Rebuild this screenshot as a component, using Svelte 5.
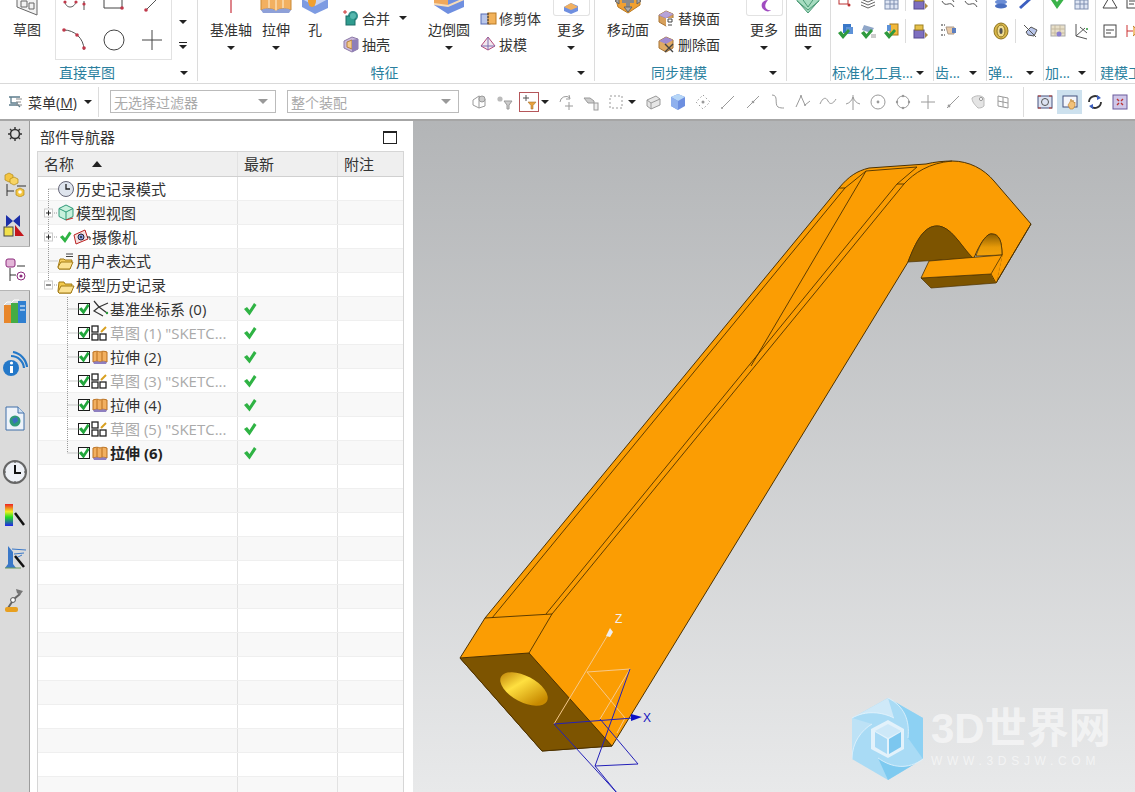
<script>
  const g = '#9a9a9a';
  const icons = {
    // ribbon, small
    unite: `<circle cx="11" cy="7" r="5" fill="#2f8f8a"/><rect x="4" y="7" width="9" height="9" fill="#2f9c8f" stroke="#1d6c66"/><path d="M1 3h4M3 1v4" stroke="#c33" /><circle cx="11" cy="7" r="3" fill="#55b7ae"/>`,
    shell: `<path d="M2 6l8-4 6 2v10l-6 3-8-4z" fill="#c9b8dc" stroke="#8d7aa6"/><path d="M5 7l5-2v9l-5-2z" fill="#f3c98a" stroke="#b58140"/><path d="M10 5l6-1v10l-6 3z" fill="#8f7fb8"/>`,
    trim: `<rect x="2" y="5" width="9" height="10" fill="#b9c6ea" stroke="#5a6fb5"/><rect x="9" y="4" width="8" height="11" fill="#f2b25a" stroke="#b97a25"/><path d="M9 4v11" stroke="#333" stroke-dasharray="2 1"/>`,
    draft: `<path d="M9 2L2 11l7 4 7-4z" fill="#f2e6ee" stroke="#b44a7a"/><path d="M9 2v13M2 11h14" stroke="#7d6fb0"/>`,
    replace: `<path d="M2 6l7-4 7 3v8l-7 4-7-4z" fill="#d7a05c" stroke="#a87435"/><path d="M2 6l7 3 7-4" fill="none" stroke="#8e7fc0"/><path d="M9 2l7 3-7 4-7-3z" fill="#b6a3d8"/><rect x="9" y="9" width="8" height="8" fill="#fff"/><path d="M11 10h4v3h-4zM11 16h4" stroke="#444" fill="none"/>`,
    del: `<path d="M2 6l7-4 7 3v8l-7 4-7-4z" fill="#e0aa64" stroke="#a87435"/><path d="M9 2l7 3-7 4-7-3z" fill="#a18bd0"/><path d="M8 9l8 8M16 9l-8 8" stroke="#444" stroke-width="1.4"/>`,
    // ribbon, right hand groups
    a1: `<rect x="7" y="2" width="8" height="9" fill="#3a78c8"/><rect x="10" y="5" width="7" height="7" fill="#5d92d8"/><path d="M2 11l3-2 2.500 3L12 7l2 2-7 8z" fill="#2f9a3e"/>`,
    a2: `<path d="M5 3l10 3-3 5-9-3z" fill="#8fa6c8"/><path d="M2 11l3-2 2.500 3L12 7l2 2-7 8z" fill="#2f9a3e"/><rect x="12" y="12" width="5" height="4" fill="#ccc"/>`,
    a3: `<rect x="8" y="2" width="8" height="11" fill="#f2b83a" stroke="#a87b1b"/><rect x="5" y="3" width="4" height="6" fill="#5d92d8"/><path d="M2 11l3-2 2.500 3L12 7l2 2-7 8z" fill="#2f9a3e"/>`,
    a4: `<rect x="3" y="8" width="10" height="8" fill="#7e6fc0" stroke="#55488f"/><rect x="4" y="3" width="8" height="5" fill="#e6c04a" stroke="#9e8222"/><path d="M14 10l3 3-3 3z" fill="#a84"/>`,
    gear: `<path d="M2 3h4M2 8h4M2 13h4" stroke="#333" stroke-dasharray="2 1"/><path d="M7 5h8v7H9z" fill="#e8c9a6" stroke="#a98"/><rect x="13" y="6" width="4" height="5" fill="#5d7fc0"/>`,
    spring: `<ellipse cx="9" cy="9" rx="7" ry="8" fill="#d8b64a" stroke="#8e7520"/><ellipse cx="9" cy="9" rx="4" ry="6" fill="#f0dc90" stroke="#8e7520"/><ellipse cx="9" cy="9" rx="1.6" ry="3" fill="#555"/>`,
    damper: `<path d="M3 3l12 12M5 10l5-5 6 3-3 6-6-1z" fill="#b9c6ea" stroke="#555"/>`,
    gridp: `<rect x="2" y="3" width="14" height="11" fill="#e8dfc8" stroke="#aaa"/><path d="M2 7h14M2 11h14M6 3v11M11 3v11" stroke="#c4b9a0"/><circle cx="10" cy="12" r="2.5" fill="#8a7fd0"/>`,
    axes: `<path d="M4 2v12l11 3M4 14l9-8M8 5l7 6" fill="none" stroke="#555"/><circle cx="15" cy="7" r="1" fill="#2a9a3a"/>`,
    doc: `<rect x="3" y="3" width="12" height="12" fill="#fff" stroke="#444"/><path d="M5 8h8M5 11h5" stroke="#444"/>`,
    arrow: `<path d="M3 3v12M3 9h12" stroke="#c33"/><path d="M9 4l6 5-6 5" fill="#f2c27a" stroke="#b97a25"/>`,
    tri: `<path d="M9 3l7 12H2z" fill="#fff" stroke="#444"/>`,
    stack: `<ellipse cx="9" cy="5" rx="6" ry="2.6" fill="#4a6fc0"/><ellipse cx="9" cy="9" rx="6" ry="2.6" fill="#6c8ed6"/><ellipse cx="9" cy="13" rx="6" ry="2.6" fill="#4a6fc0"/>`,
    check: `<path d="M2 7l3-2 3 4 5-6 3 2-8 11z" fill="#3bb34a"/>`,
    pen: `<path d="M4 14l10-9 2 2-10 9z" fill="#3c5fc0"/>`,
    layers: `<path d="M9 3l7 3-7 3-7-3zM2 9l7 3 7-3M2 12l7 3 7-3" fill="none" stroke="#666"/>`,
    table: `<rect x="3" y="2" width="13" height="14" fill="#dfe6f4" stroke="#7f8fb0"/><path d="M3 7h13M3 11h13M8 2v14M12 2v14" stroke="#7f8fb0"/>`,
    rectdot: `<rect x="3" y="2" width="9" height="9" fill="#fff" stroke="#b33"/><rect x="13" y="3" width="4" height="4" fill="#e8a23c"/><circle cx="13" cy="12" r="1.5" fill="#b33"/>`,
    filter: `<path d="M3 5h6M6 2v6" stroke="#555"/><path d="M8 9h8l-3 3.500V16h-2v-3.500z" fill="#e8a23c" stroke="#a87435" stroke-width=".6"/>`,
    curves: `<path d="M3 3c4 8 8-2 12 6M3 8c4 8 8-2 12 6" fill="none" stroke="#555"/>`,
    // selection bar
    t1: `<path d="M3 7l6-4v12l-6-3zM9 3l6 3v7l-6 2" fill="none" stroke="${g}"/><circle cx="12" cy="6" r="3" fill="#ccc" stroke="${g}"/>`,
    t2: `<circle cx="5" cy="6" r="2.6" fill="#bbb"/><path d="M9 8h8l-3 4v4h-2v-4z" fill="#ccc" stroke="${g}"/>`,
    t4: `<path d="M3 9a6 6 0 0 1 10-4" fill="none" stroke="${g}"/><path d="M12 2l1 4-4 0" fill="none" stroke="${g}"/><path d="M12 9v8M8 13h8" stroke="${g}"/>`,
    t5: `<path d="M2 5h6l4 3v2H6z" fill="#ccc" stroke="${g}"/><rect x="12" y="10" width="4" height="7" fill="#eee" stroke="${g}"/>`,
    t6: `<rect x="3" y="3" width="12" height="12" fill="none" stroke="${g}" stroke-dasharray="2 2"/>`,
    t7: `<path d="M3 7l9-4 4 3v6l-9 4-4-3z" fill="#e6e6e6" stroke="${g}"/><path d="M3 7l4 3v6M7 10l9-4" fill="none" stroke="${g}"/>`,
    t8: `<path d="M9 1l7 3v9l-7 4-7-4V4z" fill="#6d8fe0"/><path d="M9 1l7 3-7 4-7-4z" fill="#b6d6f7"/><path d="M9 8v9l-7-4V4z" fill="#8fb0ee"/>`,
    t9: `<path d="M9 2l7 7-7 7-7-7z" fill="none" stroke="${g}" stroke-dasharray="1.5 2.5"/><circle cx="9" cy="9" r="1.5" fill="${g}"/>`,
    t10: `<path d="M3 15L15 3" stroke="${g}"/><circle cx="3" cy="15" r="1" fill="${g}"/>`,
    t11: `<path d="M3 15L15 3" stroke="${g}"/><circle cx="9" cy="9" r="1.3" fill="${g}"/>`,
    t12: `<path d="M3 2c7 0 2 9 6 12 2 1 4 1 6 1" fill="none" stroke="${g}"/>`,
    t13: `<path d="M2 14L7 3l4 9 5-4" fill="none" stroke="${g}"/><circle cx="7" cy="3" r="1" fill="${g}"/><circle cx="11" cy="12" r="1" fill="${g}"/>`,
    t14: `<path d="M1 11c3-7 6-7 8-3s5 3 8-2" fill="none" stroke="${g}"/>`,
    t15: `<path d="M9 2v15M2 11c4-1 6-4 7-7 1 3 3 6 7 7" fill="none" stroke="${g}"/>`,
    t16: `<circle cx="9" cy="9" r="7" fill="none" stroke="${g}"/><circle cx="9" cy="9" r="1.4" fill="${g}"/>`,
    t17: `<circle cx="9" cy="9" r="6" fill="none" stroke="${g}"/><circle cx="9" cy="3" r="1.2" fill="${g}"/><circle cx="9" cy="15" r="1.2" fill="${g}"/><circle cx="3" cy="9" r="1.2" fill="${g}"/><circle cx="15" cy="9" r="1.2" fill="${g}"/>`,
    t18: `<path d="M9 2v14M2 9h14" stroke="${g}"/>`,
    t19: `<path d="M3 15L15 3" stroke="${g}"/><circle cx="5" cy="13" r="1.4" fill="${g}"/>`,
    t20: `<path d="M3 5c4-3 9-3 12 0v8c-2 2-4 2-6 2-3-3-6-6-6-10z" fill="#e4e4e4" stroke="#bbb"/><circle cx="12" cy="6" r="1.6" fill="#fff" stroke="${g}"/>`,
    t21: `<path d="M4 3l10 2v10l-10-2zM4 8l10 2M9 4v10" fill="none" stroke="${g}"/>`,
    fit: `<rect x="2" y="3" width="14" height="12" fill="#dde3f2" stroke="#44537f"/><circle cx="9" cy="9" r="3.5" fill="none" stroke="#555"/><path d="M2 3h3M13 3h3M2 15h3M13 15h3" stroke="#c0392b"/>`,
    pan: `<rect x="2" y="3" width="14" height="11" fill="#f4f6fb" stroke="#44537f"/><path d="M9 9l1-3 1 3 1-2 1 3 1-1v4l-2 3h-3l-2-4z" fill="#f2c27a" stroke="#b97a25" stroke-width=".6"/>`,
    spin: `<path d="M3 9a6 6 0 0 1 10-4.4M15 9a6 6 0 0 1-10 4.4" fill="none" stroke="#333" stroke-width="1.8"/><path d="M11 2l4 3-4 2zM7 16l-4-3 4-2z" fill="#3c5fc0"/>`,
    views: `<rect x="2" y="2" width="14" height="14" fill="#cfc6e8" stroke="#6a5a9c"/><path d="M6 6l2 2M12 6l-2 2M6 12l2-2M12 12l-2-2" stroke="#b33" stroke-width="1.4"/>`,
    menu: `<path d="M2 4h11M4 4v6h7M2 12h9l2 2" fill="none" stroke="#5c7c8c" stroke-width="1.3"/><path d="M9 6h6M9 9h5M9 12h6" stroke="#888"/>`,
    // sidebar
    s1: `<path d="M3 4l4-2 4 2v5l-4 2-4-2z" fill="#f4c542" stroke="#b38a14" stroke-width=".7"/><path d="M8 8l4-2 4 2v4l-4 2-4-2z" fill="#f7d465" stroke="#b38a14" stroke-width=".7"/><path d="M5 13v12M5 20h7M15 15h9" stroke="#333"/><path d="M14 19l4-2 4 2v5l-4 2-4-2z" fill="#f4c542" stroke="#b38a14" stroke-width=".7"/><circle cx="18" cy="21" r="1.800" fill="#fff"/>`,
    s2: `<path d="M4 2l7 6 7-6v12l-7-6-7 6z" fill="#1c2fa8"/><rect x="2" y="14" width="9" height="9" fill="#f2e04a" stroke="#444"/><path d="M13 12v11h9z" fill="#c4161c"/>`,
    s3: `<rect x="4" y="3" width="9" height="8" rx="2" fill="#e3b6d8" stroke="#8c2a7c"/><path d="M15 10h8M8 12v13M8 19h6" stroke="#333"/><circle cx="19" cy="20" r="4" fill="none" stroke="#8c2a7c"/><circle cx="19" cy="20" r="1.6" fill="#8c2a7c"/>`,
    s4: `<rect x="2" y="7" width="7" height="18" fill="#e8862a"/><rect x="9" y="5" width="7" height="20" fill="#44ac44"/><rect x="16" y="3" width="8" height="22" fill="#2f7fd0"/><path d="M2 7l3-3h4M9 5l3-3h5M18 8h5M18 12h5" stroke="#fff" fill="none"/>`,
    s5: `<circle cx="9" cy="17" r="8" fill="#2478c8"/><rect x="8" y="15" width="3" height="7" fill="#fff"/><circle cx="9.5" cy="12" r="1.6" fill="#fff"/><path d="M9 5a13 13 0 0 1 13 12M11 1a17 17 0 0 1 14 15" fill="none" stroke="#2478c8" stroke-width="2.2"/>`,
    s6: `<path d="M4 2h12l6 6v17H4z" fill="#eef3fa" stroke="#3f6ea8"/><path d="M16 2v6h6" fill="#cfe0f2" stroke="#3f6ea8"/><circle cx="13" cy="16" r="5.5" fill="#2f9a78"/><path d="M10 14l5-2 1 4-4 3z" fill="#3c6fc0"/>`,
    s7: `<circle cx="13" cy="13" r="11" fill="#eef1f6" stroke="#666" stroke-width="2"/><path d="M13 6v8h6" fill="none" stroke="#111" stroke-width="2"/><path d="M13 3v1M13 22v1M3 13h1M22 13h1" stroke="#333"/>`,
    s8: `<defs><linearGradient id="rb" x1="0" y1="0" x2="0" y2="1"><stop offset="0" stop-color="#e22"/><stop offset=".35" stop-color="#ee2"/><stop offset=".6" stop-color="#2d2"/><stop offset="1" stop-color="#22e"/></linearGradient></defs><rect x="3" y="2" width="8" height="22" fill="url(#rb)"/><path d="M13 11l9 12" stroke="#111" stroke-width="2.5"/>`,
    s9: `<path d="M6 2v18l-3 4h11l-3-4V8z" fill="#3a78c8"/><path d="M10 5l14 1M12 10l10-1M14 14l6-3" stroke="#3a78c8"/><path d="M13 12l9 11" stroke="#111" stroke-width="2.5"/><path d="M3 24h16" stroke="#6a9a5a"/>`,
    s10: `<path d="M6 22l6-9 6-5" fill="none" stroke="#666" stroke-width="2"/><path d="M14 3l7 2-3 4-3-2z" fill="#777"/><circle cx="11" cy="14" r="2.4" fill="#fff" stroke="#555"/><rect x="3" y="21" width="13" height="5" rx="2" fill="#e8a020"/>`,
    // navigator rows
    clock: `<circle cx="9" cy="9" r="7.5" fill="#dfe5ee" stroke="#667"/><path d="M9 4v5h4" fill="none" stroke="#222" stroke-width="1.3"/>`,
    view: `<path d="M9 1l7 3.5v8L9 16l-7-3.5v-8z" fill="#c8f0dc" stroke="#2f9a78"/><path d="M2 4.5L9 8l7-3.5M9 8v8" fill="none" stroke="#2f9a78"/><path d="M9 16l7-2" stroke="#c33" stroke-width="1.3"/>`,
    cam: `<path d="M1 7l11-5 3 9-12 5z" fill="#f6e0e0" stroke="#b22"/><circle cx="8" cy="9" r="3" fill="#8c9fe0" stroke="#223"/><circle cx="8" cy="9" r="1" fill="#222"/><path d="M14 9h3v3" fill="none" stroke="#222"/>`,
    expr: `<path d="M1 15l2-8h4l1 1h7l-2 9H2z" fill="#f7cf62" stroke="#a27a14"/><path d="M1 15l3-5h12l-3 7H2z" fill="#fbe192" stroke="#a27a14"/><path d="M9 2h7M9 4.500h7" stroke="#444"/>`,
    folder: `<path d="M1 15l1-9h5l1 2h7l-1 9H2z" fill="#f2c94c" stroke="#a27a14"/><path d="M1 16l3-6h13l-3 7H2z" fill="#fbe192" stroke="#a27a14"/>`,
    csys: `<path d="M3 1l5 6-5 4 9 5M8 7l9-4M8 7l8 6" fill="none" stroke="#333" stroke-width="1.2"/><circle cx="16" cy="13" r="1.2" fill="#2a9a3a"/>`,
    sketch: `<rect x="1" y="2" width="6" height="6" fill="#fff" stroke="#222" stroke-width="1.3"/><rect x="1" y="10" width="6" height="6" fill="#fff" stroke="#222" stroke-width="1.3"/><rect x="9" y="10" width="6" height="6" fill="#fff" stroke="#222" stroke-width="1.3"/><path d="M10 8l5-5" stroke="#d8a020" stroke-width="2"/>`,
    extrude: `<path d="M2 4c3-1 5-1 7 0 2-1 4-1 7 0v10c-3-1-5-1-7 0-2-1-4-1-7 0z" fill="#f2b060" stroke="#b96f1d"/><path d="M6 4v10M11 4v10" stroke="#b96f1d"/><path d="M2 14c3-1 5-1 7 0 2-1 4-1 7 0l-1 2H3z" fill="#8e7fc0"/>`
  };

  const toolbar = [
    { i: 't1' }, { i: 't2' }, { i: 'filter', cls: 'flt' }, { caret: 1 }, { i: 't4' }, { i: 't5' }, { i: 't6' }, { caret: 1 },
    { i: 't7' }, { i: 't8' }, { i: 't9' }, { i: 't10' }, { i: 't11' }, { i: 't12' }, { i: 't13' }, { i: 't14' }, { i: 't15' },
    { i: 't16' }, { i: 't17' }, { i: 't18' }, { i: 't19' }, { i: 't20' }, { i: 't21' }, { sep: 1 },
    { i: 'fit' }, { i: 'pan', cls: 'on' }, { i: 'spin' }, { i: 'views' }
  ];

  const side = [
    { i: 's1', h: 42 }, { i: 's2', h: 41 }, { i: 's3', h: 45, cls: 'active' }, { i: 's4', h: 40 }, { i: 's5', h: 42, gap: 12 },
    { i: 's6', h: 42, gap: 12 }, { i: 's7', h: 42, gap: 12 }, { i: 's8', h: 42, gap: 1 }, { i: 's9', h: 42 }, { i: 's10', h: 42 }
  ];

  const rows = [
    { lv: 0, icon: 'clock', text: '历史记录模式' },
    { lv: 0, icon: 'view', text: '模型视图' },
    { lv: 0, tick: true, icon: 'cam', text: '摄像机' },
    { lv: 0, icon: 'expr', text: '用户表达式' },
    { lv: 0, icon: 'folder', text: '模型历史记录' },
    { lv: 1, icon: 'csys', text: '基准坐标系 (0)', ok: true },
    { lv: 1, icon: 'sketch', text: '草图 (1) "SKETC...', ok: true, dim: true },
    { lv: 1, icon: 'extrude', text: '拉伸 (2)', ok: true },
    { lv: 1, icon: 'sketch', text: '草图 (3) "SKETC...', ok: true, dim: true },
    { lv: 1, icon: 'extrude', text: '拉伸 (4)', ok: true },
    { lv: 1, icon: 'sketch', text: '草图 (5) "SKETC...', ok: true, dim: true },
    { lv: 1, icon: 'extrude', text: '拉伸 (6)', ok: true, bold: true }
  ];
  const filler = Array.from({ length: 14 });
  const tickPath = 'M1 7l3-2 2.500 3L11 1l2.500 2L6.500 13.500z';
</script>

<div class="app">
  <section class="ribbon">
    <div class="group w-sketch">
      <div class="body">
        <div class="big b-sketch">
          <div class="cut"><svg width="24" height="24" viewBox="0 0 24 24"><path d="M2 -6l20 8v20L2 14z" fill="#f2f2f2" stroke="#666"/><path d="M6 8h6v6H6zM14 10h5v6h-5z" fill="none" stroke="#666"/></svg></div>
          <span>草图</span>
        </div>
        <div class="gallery">
          <div class="gal-row top">
            <svg width="26" height="16" viewBox="0 0 26 16"><path d="M3 1c0 8 10 8 11 0" fill="none" stroke="#555"/><path d="M22 1v9" stroke="#555"/><circle cx="3" cy="2" r="1.6" fill="#c0394b"/><circle cx="14" cy="2" r="1.6" fill="#c0394b"/><circle cx="22" cy="4" r="1.6" fill="#c0394b"/></svg>
            <svg width="26" height="16" viewBox="0 0 26 16"><path d="M3 -4v12h18" fill="none" stroke="#444"/><path d="M21 8V-4" stroke="#444"/><circle cx="21" cy="8" r="1.8" fill="#c0394b"/></svg>
            <svg width="26" height="16" viewBox="0 0 26 16"><path d="M7 10L20 -3" stroke="#555"/><circle cx="7" cy="10" r="1.8" fill="#c0394b"/></svg>
          </div>
          <div class="gal-row">
            <svg width="26" height="26" viewBox="0 0 26 26"><path d="M2 3c10 0 20 8 20 20" fill="none" stroke="#555"/><circle cx="2" cy="3" r="1.8" fill="#c0394b"/><circle cx="15" cy="8" r="1.8" fill="#c0394b"/><circle cx="22" cy="21" r="1.8" fill="#c0394b"/></svg>
            <svg width="26" height="26" viewBox="0 0 26 26"><circle cx="13" cy="13" r="10" fill="none" stroke="#444"/></svg>
            <svg width="26" height="26" viewBox="0 0 26 26"><path d="M13 3v20M3 13h20" stroke="#444"/></svg>
          </div>
        </div>
        <div class="scroll"><i class="caret"></i><i class="caret barred"></i></div>
      </div>
      <div class="foot"><span>直接草图</span><i class="caret"></i></div>
    </div>

    <div class="group w-feature">
      <div class="body">
        <div class="big b-axis">
          <div class="cut"><svg width="24" height="24" viewBox="0 0 24 24"><path d="M12 0v20" stroke="#d0505a" stroke-width="1.4"/></svg></div>
          <span>基准轴</span><i class="caret"></i>
        </div>
        <div class="big b-ext">
          <div class="cut"><svg width="32" height="24" viewBox="0 0 32 24"><path d="M1 0v17c6-2 11-2 15 1 4-3 9-3 15-1V0z" fill="#f2b060" stroke="#c98a35"/><path d="M16 0v18M9 0v15M23 0v15" stroke="#fff2d8"/><path d="M1 17c6-2 11-2 15 1 4-3 9-3 15-1l-2 3H3z" fill="#8ea0d8"/></svg></div>
          <span>拉伸</span><i class="caret"></i>
        </div>
        <div class="big b-hole">
          <div class="cut"><svg width="30" height="24" viewBox="0 0 30 24"><path d="M2 0v14l13 7 13-6V0z" fill="#7d9be2"/><path d="M2 6l13 7 13-7V0H2z" fill="#c7d3f2"/><ellipse cx="12" cy="8" rx="4" ry="6" fill="#f0a030"/></svg></div>
          <span>孔</span>
        </div>
        <div class="smalls s-union">
          <div class="small"><svg width="18" height="18">{@html icons.unite}</svg><span>合并</span><i class="caret gap"></i></div>
          <div class="small"><svg width="18" height="18">{@html icons.shell}</svg><span>抽壳</span></div>
        </div>
        <div class="big b-edge">
          <div class="cut"><svg width="34" height="24" viewBox="0 0 34 24"><path d="M2 0v12l14 9 16-7V0z" fill="#6f8fe0"/><path d="M2 0v11l14 2V0z" fill="#f0a85c"/><path d="M2 11l14 2 16-7" fill="none" stroke="#f7dcb8" stroke-width="2"/></svg></div>
          <span>边倒圆</span><i class="caret"></i>
        </div>
        <div class="smalls s-trim">
          <div class="small"><svg width="18" height="18">{@html icons.trim}</svg><span>修剪体</span></div>
          <div class="small"><svg width="18" height="18">{@html icons.draft}</svg><span>拔模</span></div>
        </div>
        <div class="big b-more">
          <div class="cut boxed"><svg width="20" height="16" viewBox="0 0 20 16"><path d="M3 8l7-4 7 3v5l-7 3-7-3z" fill="#6f8fe0"/><path d="M3 8l7 3 7-3-7-4z" fill="#f0b060"/></svg></div>
          <span>更多</span><i class="caret"></i>
        </div>
      </div>
      <div class="foot"><span>特征</span><i class="caret"></i></div>
    </div>

    <div class="group w-sync">
      <div class="body">
        <div class="big b-move">
          <div class="cut"><svg width="32" height="24" viewBox="0 0 32 24"><path d="M2 0l4 14 10 6 12-8V0z" fill="#f0a030" stroke="#b97a25"/><path d="M16 2v12M10 8h12" stroke="#888" stroke-width="4"/><path d="M12 14h8l-4 5zM7 5v6l-4-3zM25 5v6l4-3z" fill="#aaa" stroke="#666"/></svg></div>
          <span>移动面</span>
        </div>
        <div class="smalls s-rep">
          <div class="small"><svg width="18" height="18">{@html icons.replace}</svg><span>替换面</span></div>
          <div class="small"><svg width="18" height="18">{@html icons.del}</svg><span>删除面</span></div>
        </div>
        <div class="big b-more2">
          <div class="cut boxed"><svg width="20" height="16" viewBox="0 0 20 16"><path d="M14 1c-7 0-9 8-2 11 2 1 4 0 5-1-4 1-9-3-3-10z" fill="#a04cc0"/></svg></div>
          <span>更多</span><i class="caret"></i>
        </div>
      </div>
      <div class="foot"><span>同步建模</span><i class="caret"></i></div>
    </div>

    <div class="group w-surf">
      <div class="body">
        <div class="big b-surf">
          <div class="cut"><svg width="30" height="24" viewBox="0 0 30 24"><path d="M1 4l14 16L29 4z" fill="#a6dcc0" stroke="#4c9a76"/><path d="M8 4l7 10 7-10M4 8l11 9M26 8L15 17" stroke="#4c9a76" fill="none"/></svg></div>
          <span>曲面</span><i class="caret"></i>
        </div>
      </div>
      <div class="foot"></div>
    </div>

    <div class="group w-std">
      <div class="rows">
        <div class="irow top"><svg width="18" height="18">{@html icons.rectdot}</svg><svg width="18" height="18">{@html icons.layers}</svg><svg width="18" height="18">{@html icons.table}</svg><b class="vsep"></b><svg width="18" height="18">{@html icons.a4}</svg></div>
        <div class="irow"><svg width="18" height="18">{@html icons.a1}</svg><svg width="18" height="18">{@html icons.a2}</svg><svg width="18" height="18">{@html icons.a3}</svg><b class="vsep"></b><svg width="18" height="18">{@html icons.a4}</svg></div>
      </div>
      <div class="foot left"><span>标准化工具...</span><i class="caret"></i></div>
    </div>

    <div class="group w-gear">
      <div class="rows">
        <div class="irow top"><svg width="18" height="18">{@html icons.curves}</svg><svg width="18" height="18">{@html icons.curves}</svg></div>
        <div class="irow"><svg width="18" height="18">{@html icons.gear}</svg></div>
      </div>
      <div class="foot left"><span>齿...</span><i class="caret"></i></div>
    </div>

    <div class="group w-spring">
      <div class="rows">
        <div class="irow top"><svg width="18" height="18">{@html icons.stack}</svg><svg width="18" height="18">{@html icons.pen}</svg></div>
        <div class="irow"><svg width="18" height="18">{@html icons.spring}</svg><b class="vsep"></b><svg width="18" height="18">{@html icons.damper}</svg></div>
      </div>
      <div class="foot left"><span>弹...</span><i class="caret"></i></div>
    </div>

    <div class="group w-add">
      <div class="rows">
        <div class="irow top"><svg width="18" height="18">{@html icons.check}</svg><svg width="18" height="18">{@html icons.table}</svg></div>
        <div class="irow"><svg width="18" height="18">{@html icons.gridp}</svg><svg width="18" height="18">{@html icons.axes}</svg></div>
      </div>
      <div class="foot left"><span>加...</span><i class="caret"></i></div>
    </div>

    <div class="group w-tool">
      <div class="rows">
        <div class="irow top"><svg width="18" height="18">{@html icons.tri}</svg><svg width="18" height="18">{@html icons.doc}</svg></div>
        <div class="irow"><svg width="18" height="18">{@html icons.doc}</svg><svg width="18" height="18">{@html icons.arrow}</svg></div>
      </div>
      <div class="foot left"><span>建模工具</span></div>
    </div>
  </section>

  <section class="toolbar">
    <div class="menu"><svg width="18" height="18">{@html icons.menu}</svg><span>菜单(<u>M</u>)</span><i class="caret"></i></div>
    <b class="vsep tall"></b>
    <div class="select s1"><span>无选择过滤器</span><i class="caret grey"></i></div>
    <div class="select s2"><span>整个装配</span><i class="caret grey"></i></div>
    <div class="tools">
      {#each toolbar as t}
        {#if t.caret}
          <i class="caret tcaret"></i>
        {:else if t.sep}
          <b class="vsep tall tsep"></b>
        {:else}
          <div class="tool {t.cls ?? ''}"><svg width="18" height="18">{@html icons[t.i]}</svg></div>
        {/if}
      {/each}
    </div>
  </section>

  <main class="main">
    <aside class="side">
      <div class="gearbtn">
        <svg width="16" height="16" viewBox="0 0 16 16"><circle cx="8" cy="8" r="4.500" fill="none" stroke="#333" stroke-width="1.6"/><path d="M8 1v3M8 12v3M1 8h3M12 8h3M3 3l2 2M11 11l2 2M3 13l2-2M11 5l2-2" stroke="#333" stroke-width="1.4"/></svg>
      </div>
      {#each side as s}
        <div class="stab {s.cls ?? ''}" style:height="{s.h}px" style:margin-top="{s.gap ?? 0}px"><svg width="26" height="26">{@html icons[s.i]}</svg></div>
      {/each}
    </aside>

    <section class="nav">
      <header class="nav-head">
        <span>部件导航器</span>
        <i class="maxbox"></i>
      </header>
      <div class="table">
        <div class="thead">
          <div class="c1">名称<i class="sort"></i></div>
          <div class="c2">最新</div>
          <div class="c3">附注</div>
        </div>
        <div class="tbody">
          {#each rows as r, n}
            <div class="row" class:alt={n % 2 === 1}>
              <div class="c1 name lv{r.lv}" class:tick={r.tick}>
                {#if r.lv === 1}<i class="cbx"><svg width="12" height="12" viewBox="0 0 14 14"><path d={tickPath} fill="#22a63c"/></svg></i>{/if}
                {#if r.tick}<svg class="tk" width="13" height="14" viewBox="0 0 14 14"><path d={tickPath} fill="#2fb344"/></svg>{/if}
                <svg width="18" height="18">{@html icons[r.icon]}</svg>
                <span class:dim={r.dim} class:bold={r.bold}>{r.text}</span>
              </div>
              <div class="c2">{#if r.ok}<svg width="14" height="14" viewBox="0 0 14 14"><path d={tickPath} fill="#2fb344"/></svg>{/if}</div>
              <div class="c3"></div>
            </div>
          {/each}
          {#each filler as _, n}
            <div class="row" class:alt={(n + rows.length) % 2 === 1}><div class="c1"></div><div class="c2"></div><div class="c3"></div></div>
          {/each}
          <svg class="lines" width="60" height="290" viewBox="0 0 60 290">
            <g stroke="#9a9a9a" stroke-dasharray="1 1" fill="none">
              <path d="M10.500 12V109M10.500 12H20M16 36h4M16 60h4M10.500 84H20M16 108h4"/>
              <path d="M29.500 120V276M29.500 132H41M29.500 156H41M29.500 180H41M29.500 204H41M29.500 228H41M29.500 252H41M29.500 276H41"/>
            </g>
            <g fill="#fff" stroke="#ccc"><rect x="6.500" y="32" width="8" height="8"/><rect x="6.500" y="56" width="8" height="8"/><rect x="6.500" y="104" width="8" height="8"/></g>
            <path d="M8 36h5M10.500 33.500v5M8 60h5M10.500 57.500v5M8 108h5" stroke="#222" fill="none"/>
          </svg>
        </div>
      </div>
    </section>

    <section class="viewport">
      <svg class="model" viewBox="414 120 721 672" width="721" height="672">
        <defs>
          <linearGradient id="holeg" x1="0" y1="0" x2="1" y2=".3">
            <stop offset="0" stop-color="#b87800"/><stop offset=".45" stop-color="#ffe040"/><stop offset="1" stop-color="#c88a00"/>
          </linearGradient>
          <linearGradient id="notch" x1="0" y1="0" x2="0" y2="1">
            <stop offset="0" stop-color="#8a5c00"/><stop offset=".6" stop-color="#e79a08"/><stop offset="1" stop-color="#f5a20a"/>
          </linearGradient>
        </defs>
        <path d="M461 657L486 617L840 187C850 175 858 170 870 167L927 163C935 161 945 160 953 160C970 160 985 168 995 180L1032 223L997 282L1003 254C1003 240 1000 233 993 233C988 232 981 242 975 257L973 257C962 245 952 225 938 225C925 225 917 240 909 261L613 745L543 750Z" fill="#fb9d03" stroke="#4d3200" stroke-linejoin="round"/>
        <path d="M909 261C917 240 925 225 938 225C952 225 962 245 974 257Z" fill="#7d5400" stroke="#4d3200" stroke-width=".7"/>
        <path d="M977 255C981 242 988 232 993 233C1000 233 1003 240 1003 254Z" fill="url(#notch)" stroke="#4d3200" stroke-width=".7"/>
        <path d="M922 277L992 273L997 282L932 287Z" fill="#7d5400" stroke="#4d3200" stroke-width=".7"/>
        <path d="M1003 254L992 273L997 282Z" fill="#fb9d03" stroke="#fb9d03"/>
        <path d="M922 277L930 260L1003 254L992 273Z" fill="#fb9d03" stroke="#4d3200" stroke-width=".8"/>
        <path d="M992 273L997 282L1032 223" fill="none" stroke="#4d3200" stroke-width=".9"/>
        <path d="M461 657L530 652L613 745L543 750Z" fill="#7d5400" stroke="#4d3200"/>
        <ellipse cx="525" cy="688" rx="26" ry="13" transform="rotate(28 525 688)" fill="url(#holeg)"/>
        <g fill="none" stroke="#4d3200" stroke-width=".9">
          <path d="M530 652L553 613L905 183C915 172 930 162 953 160"/>
          <path d="M486 617L553 613"/>
          <path d="M493 617L846 187L840 187"/>
          <path d="M547 613L898 183L905 183"/>
          <path d="M752 365L867 170L918 166L898 183"/>
          <path d="M846 187L867 170"/>
        </g>
        <g fill="none" stroke="#f6c98c" stroke-width="1">
          <path d="M555 723L610 632"/>
          <path d="M588 671L631 668M588 671L626 717M631 668L601 718"/>
          <path d="M626 717L618 732"/>
        </g>
        <path d="M607 635l4-8 3 4-3 5z" fill="#eee"/>
        <text class="zlabel" x="616" y="622">Z</text>
        <g fill="none" stroke="#2320b8" stroke-width="1">
          <path d="M555 723L634 717"/>
          <path d="M555 723L618 792"/>
          <path d="M601 718L639 763L596 765L631 668"/>
          <path d="M596 765L618 792" />
        </g>
        <path d="M632 713l11 3-11 4z" fill="#0a10c8"/>
        <text class="xlabel" x="644" y="721">X</text>
      </svg>

      <div class="mark">
        <svg width="72" height="82" viewBox="0 0 72 82">
          <path d="M36 0L71 20V61L36 82L0 61V20Z" fill="#a9dbf5"/>
          <path d="M36 0C52 8 58 22 56 40L71 61V20Z" fill="#8dd1f3"/>
          <path d="M0 20C14 12 30 14 42 20L36 0Z" fill="#cfe9f8"/>
          <path d="M71 61C56 72 40 70 26 60L36 82Z" fill="#7ecaf0"/>
          <path d="M0 61C0 44 10 32 20 26L0 20Z" fill="#bde2f6"/>
          <path d="M36 0C52 8 58 22 56 40M0 20C14 12 30 14 42 20M71 61C56 72 40 70 26 60M0 61C0 44 10 32 20 26" fill="none" stroke="#e6f4fc" stroke-width=".8"/>
          <path d="M36 22L52 31V51L36 60L19 51V31Z" fill="#e3f2fb"/>
          <path d="M36 26L49 33L36 40L23 33Z" fill="#cde8f8"/>
          <path d="M23 34L35 41V56L23 49Z" fill="#a7d9f5"/>
          <path d="M49 34L37 41V56L49 49Z" fill="#7cc7ef"/>
        </svg>
        <div class="mark-text">
          <div class="m1">3D世界网</div>
          <div class="m2">WWW.3DSJW.COM</div>
        </div>
      </div>
    </section>
  </main>
</div>

<style>
  :global(body) {
    margin: 0;
    overflow: hidden;
    background: #fff;
  }

  .app {
    width: 1135px;
    height: 792px;
    overflow: hidden;
    font-family: "Open Sans", "Noto Sans CJK SC", sans-serif;
    font-size: 14px;
    color: #333;
    display: flex;
    flex-direction: column;
  }

  svg { display: block; flex: none; }

  .caret {
    display: block;
    width: 0;
    height: 0;
    border-left: 4px solid transparent;
    border-right: 4px solid transparent;
    border-top: 4px solid #222;
    flex: none;
  }
  .caret.grey { border-top-color: #999; border-left-width: 5px; border-right-width: 5px; border-top-width: 5px; }
  .caret.gap { margin-left: 7px; }
  .caret.barred { position: relative; margin-top: 21px; }
  .caret.barred::before {
    content: '';
    position: absolute;
    left: -4px;
    top: -7px;
    width: 8px;
    border-top: 1px solid #222;
  }

  /* ribbon */
  .ribbon {
    height: 83px;
    display: flex;
    flex: none;
    border-bottom: 1px solid #d9d9d9;
    overflow: hidden;
  }
  .group {
    flex: none;
    height: 81px;
    display: flex;
    flex-direction: column;
    border-right: 1px solid #dcdcdc;
    box-sizing: border-box;
  }
  .w-sketch { width: 198px; }
  .w-feature { width: 397px; }
  .w-sync { width: 192px; }
  .w-surf { width: 44px; }
  .w-std { width: 103px; }
  .w-gear { width: 53px; }
  .w-spring { width: 57px; }
  .w-add { width: 52px; }
  .w-tool { width: 39px; border-right: 0; overflow: hidden; }

  .body {
    flex: 1;
    display: flex;
    align-items: flex-start;
    min-height: 0;
  }
  .foot {
    height: 17px;
    display: flex;
    align-items: center;
    padding-right: 9px;
    color: #2a7f9e;
    line-height: 17px;
    flex: none;
    white-space: nowrap;
  }
  .foot span { flex: 1; text-align: center; padding-right: 6px; }
  .foot.left span { text-align: left; padding: 0 0 0 1px; }
  .w-tool .foot.left span { padding-left: 4px; }

  .big {
    display: flex;
    flex-direction: column;
    align-items: center;
    flex: none;
    line-height: 20px;
  }
  .big .caret { margin-top: 6px; }
  .cut {
    height: 20px;
    display: flex;
    align-items: flex-start;
    justify-content: center;
    overflow: hidden;
  }
  .cut > svg { margin-top: -7px; }
  .cut.boxed {
    width: 37px;
    height: 16px;
    margin-bottom: 4px;
    border: 1px solid #e2e2e2;
    border-top: 0;
    border-radius: 0 0 3px 3px;
    box-sizing: border-box;
    align-items: flex-end;
  }
  .cut.boxed > svg { margin-top: 0; }
  .b-sketch { width: 54px; }
  .gallery {
    width: 117px;
    height: 60px;
    margin-left: 1px;
    border: 1px solid #e2e2e2;
    border-top: 0;
    box-sizing: border-box;
    display: flex;
    flex-direction: column;
  }
  .gal-row {
    display: flex;
    justify-content: space-between;
    padding: 13px 6px 0;
  }
  .gal-row.top { padding-top: 0; height: 14px; overflow: hidden; }
  .scroll {
    width: 22px;
    padding-top: 20px;
    display: flex;
    flex-direction: column;
    align-items: center;
  }

  .b-axis { margin-left: 12px; width: 42px; }
  .b-ext { margin-left: 10px; width: 28px; }
  .b-hole { margin-left: 18px; width: 14px; }
  .s-union { margin-left: 20px; width: 68px; }
  .b-edge { margin-left: 18px; width: 42px; }
  .s-trim { margin-left: 9px; width: 62px; }
  .b-more { margin-left: 16px; width: 28px; }
  .b-move { margin-left: 12px; width: 42px; }
  .s-rep { margin-left: 8px; width: 64px; }
  .s-rep .small { gap: 3px; }
  .b-more2 { margin-left: 29px; width: 28px; }
  .b-surf { margin-left: 7px; width: 28px; }

  .smalls { display: flex; flex-direction: column; gap: 8px; padding-top: 9px; flex: none; }
  .small { display: flex; align-items: center; gap: 2px; height: 18px; white-space: nowrap; }

  .rows { flex: 1; min-height: 0; display: flex; flex-direction: column; gap: 11px; padding-left: 5px; }
  .irow { display: flex; align-items: center; gap: 5px; height: 18px; }
  .irow.top { height: 11px; overflow: hidden; align-items: flex-end; }
  .vsep { display: block; width: 1px; height: 24px; background: #dcdcdc; flex: none; }
  .irow.top .vsep { height: 11px; }

  /* selection bar */
  .toolbar {
    height: 35px;
    flex: none;
    display: flex;
    align-items: center;
    border-bottom: 2px solid #a6a6a6;
    box-sizing: content-box;
    padding-left: 7px;
    white-space: nowrap;
  }
  .menu { display: flex; align-items: center; gap: 3px; width: 91px; flex: none; }
  .menu .caret { margin-left: 4px; }
  .vsep.tall { height: 30px; }
  .select {
    height: 23px;
    margin-left: 11px;
    padding: 0 3px;
    box-sizing: border-box;
    border: 1px solid #bbb;
    display: flex;
    align-items: center;
    justify-content: space-between;
    color: #aaa;
    flex: none;
  }
  .select .caret { margin-right: 4px; }
  .s1 { width: 166px; }
  .s2 { width: 172px; }
  .tools { display: flex; align-items: center; margin-left: 7px; }
  .tool {
    width: 25px;
    height: 24px;
    display: flex;
    align-items: center;
    justify-content: center;
    box-sizing: border-box;
    flex: none;
  }
  .tool.flt svg { outline: 1px solid #b5565a; }
  .tool.on { background: #cde1ee; }
  .tcaret { margin: 0 4px 0 0; }
  .tsep { margin: 0 8px; }

  /* main */
  .main { flex: 1; min-height: 0; display: flex; }
  .side {
    width: 30px;
    flex: none;
    background: #dbdbdb;
    border-right: 1px solid #9c9c9c;
    box-sizing: border-box;
    display: flex;
    flex-direction: column;
  }
  .gearbtn { height: 42px; padding-bottom: 16px; box-sizing: border-box; display: flex; align-items: center; justify-content: center; flex: none; }
  .stab { display: flex; align-items: center; justify-content: center; flex: none; }
  .stab.active {
    background: #fff;
    margin-right: -1px;
    border-top: 1px solid #b5b5b5;
    border-bottom: 1px solid #b5b5b5;
    box-sizing: border-box;
  }

  .nav { width: 383px; flex: none; padding-left: 7px; box-sizing: border-box; background: #fff; }
  .nav-head {
    height: 30px;
    display: flex;
    align-items: center;
    justify-content: space-between;
    padding: 0 16px 0 3px;
    font-size: 15px;
  }
  .maxbox { width: 12px; height: 10px; border: 1px solid #222; border-top-width: 2px; display: block; margin-top: 3px; }

  .table { width: 367px; border: 1px solid #d6d6d6; border-bottom: 0; box-sizing: border-box; font-size: 15px; }
  .thead { height: 24px; display: flex; background: #efefef; border-bottom: 1px solid #d0d0d0; line-height: 24px; }
  .thead > div { box-sizing: border-box; padding-left: 6px; }
  .c1 { width: 200px; flex: none; box-sizing: border-box; border-right: 1px solid #e2e2e2; display: flex; align-items: center; }
  .c2 { width: 100px; flex: none; box-sizing: border-box; border-right: 1px solid #e2e2e2; display: flex; align-items: center; padding-left: 5px; }
  .c3 { flex: 1; }
  .sort {
    display: block;
    width: 0;
    height: 0;
    margin-left: 18px;
    border-left: 5px solid transparent;
    border-right: 5px solid transparent;
    border-bottom: 6px solid #222;
  }
  .tbody { position: relative; }
  .lines { position: absolute; left: 0; top: 0; pointer-events: none; }
  .row { height: 24px; display: flex; border-bottom: 1px solid #efefef; box-sizing: border-box; }
  .row.alt { background: #f8f8f8; }
  .name { white-space: nowrap; min-width: 0; gap: 1px; }
  .lv0 { padding-left: 19px; }
  .lv0.tick { padding-left: 21px; }
  .lv1 { padding-left: 40px; }
  .cbx {
    width: 10px;
    height: 10px;
    border: 1.500px solid #1a1a1a;
    background: #fff;
    display: flex;
    align-items: center;
    justify-content: center;
    flex: none;
  }
  .dim { color: #aaa; }
  .bold { font-weight: 700; color: #222; }

  /* graphics window */
  .viewport {
    flex: 1;
    min-width: 0;
    position: relative;
    overflow: hidden;
    background: linear-gradient(#b3b5b7, #e8e9ea);
  }
  .model { position: absolute; left: 0; top: 0; }
  .xlabel { font-family: "Liberation Sans", sans-serif; font-size: 12px; fill: #1414c0; }
  .zlabel { font-family: "Liberation Sans", sans-serif; font-size: 12px; fill: #f0f0f0; }
  .mark { position: absolute; left: 439px; top: 577px; display: flex; gap: 7px; }
  .mark-text { color: rgba(255, 255, 255, 0.55); font-family: "Liberation Sans", "Noto Sans CJK SC", sans-serif; font-weight: 700; padding-top: 9px; }
  .m1 { font-size: 42px; line-height: 44px; white-space: nowrap; }
  .m2 { font-size: 12px; letter-spacing: 4.700px; font-weight: 400; margin-top: 3px; white-space: nowrap; }
</style>
